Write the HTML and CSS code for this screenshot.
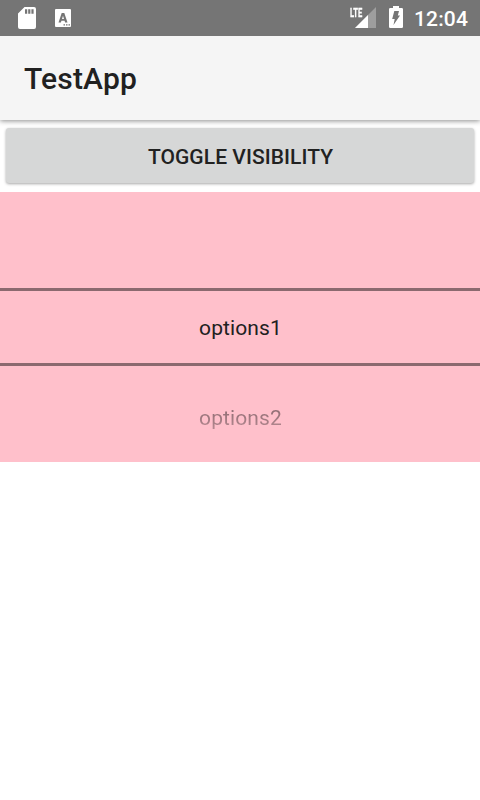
FILE: index.html
```html
<!DOCTYPE html>
<html lang="en">
<head>
<meta charset="utf-8">
<title>TestApp</title>
<link rel="stylesheet" href="styles.css">
</head>
<body>
<header class="status">
  <svg class="sd" width="18" height="22" viewBox="0 0 18 22"><path fill="#fff" fill-rule="evenodd" d="M6.500 0H16a2 2 0 0 1 2 2v18a2 2 0 0 1-2 2H2a2 2 0 0 1-2-2V6.500ZM7 2.300v4.400h2.200V2.300ZM10.200 2.300v4.400h2.200V2.300ZM13.400 2.300v4.400h2.200V2.300Z"/></svg>
  <svg class="debug" width="16" height="18" viewBox="0 0 16 18"><rect width="16" height="18" rx="1" fill="#fff"/><path fill="#757575" fill-rule="evenodd" d="M6.700 4h2.600l3.200 9.500h-2.400l-.5-1.700H6.400l-.5 1.700H3.500zM7 10h2L8 6.700z"/><path fill="#757575" d="M8.500 15.200H10v1.300H8.500zM11 15.200h1.500v1.300H11zM13.500 15.200H15v1.300h-1.500z"/></svg>
  <div class="signal">
    <span class="lte">LTE</span>
    <svg width="26" height="22" viewBox="0 0 26 22"><path fill="#fff" fill-opacity=".3" d="M26 0v21H5z"/><path fill="#fff" d="M18 8v13H5z"/></svg>
  </div>
  <svg class="battery" width="14" height="22" viewBox="0 0 14 22"><path fill="#fff" d="M4 0h6v2h2.700q1.300 0 1.300 1.300v17.400Q14 22 12.700 22H1.300Q0 22 0 20.700V3.300Q0 2 1.300 2H4z"/><path fill="#757575" d="M5.300 5H10L8.800 9.500h2.200L4.500 19 5.700 13H3.200z"/></svg>
  <span class="clock">12:04</span>
</header>
<div class="appbar"><h1>TestApp</h1></div>
<main>
  <button class="toggle" type="button">TOGGLE VISIBILITY</button>
  <div class="picker">
    <div class="edge"></div>
    <div class="option selected"><span>options1</span></div>
    <div class="edge"><span class="faded">options2</span></div>
  </div>
</main>
</body>
</html>
```
FILE: styles.css
```css
* { box-sizing: border-box; }

body {
  margin: 0;
  height: 800px;
  overflow: hidden;
  background: #fff;
  color: #212121;
  font-family: Roboto, sans-serif;
}

.status {
  position: relative;
  z-index: 1;
  display: flex;
  align-items: flex-start;
  height: 36px;
  padding: 6px 12px 0 18px;
  background: #757575;
  color: #fff;
}

.sd { margin-top: 1px; }
.debug { margin: 3px 0 0 19px; }

.signal {
  position: relative;
  width: 26px;
  height: 22px;
  margin: 1px 13px 0 auto;
}

.signal svg { display: block; }

.lte {
  position: absolute;
  left: 0;
  top: 0;
  font: 700 13.5px/10px Roboto, sans-serif;
  transform: scaleX(.56);
  transform-origin: 0 0;
  -webkit-text-stroke: .3px #fff;
}

.clock {
  width: 54px;
  margin: 1px 0 0 11px;
  font-size: 21px;
  font-weight: 500;
  letter-spacing: .15px;
  line-height: 25px;
  white-space: nowrap;
}

.appbar {
  position: relative;
  display: flex;
  align-items: center;
  height: 84px;
  padding: 2px 24px 0;
  background: #f5f5f5;
  box-shadow: 0 1px 5px rgba(0, 0, 0, .45);
}

.appbar h1 {
  margin: 0;
  font-size: 30px;
  font-weight: 500;
  letter-spacing: .18px;
  line-height: 36px;
}

main { padding-top: 8px; }

.toggle {
  display: block;
  width: 468px;
  height: 55px;
  margin: 0 6px 9px;
  padding: 4px 0 0 1px;
  border: 0;
  border-radius: 3px;
  background: #d6d7d7;
  box-shadow: 0 1px 3px rgba(0, 0, 0, .35);
  color: #212121;
  font: 500 21px/25px Roboto, sans-serif;
  letter-spacing: .06px;
}

.picker {
  height: 270px;
  padding-left: 1px;
  background: #ffc0cb;
  font-size: 21px;
  letter-spacing: .12px;
  line-height: 25px;
  text-align: center;
}

.edge { height: 96px; }

.option.selected {
  display: flex;
  align-items: center;
  justify-content: center;
  height: 78px;
  margin-left: -1px;
  padding: 2px 0 0 1px;
  border: solid #8b696f;
  border-width: 3px 0;
}

.faded {
  display: block;
  padding-top: 40px;
  background: linear-gradient(#8c6a70 42px, #b88b93 64px);
  background-clip: text;
  color: transparent;
}
```
